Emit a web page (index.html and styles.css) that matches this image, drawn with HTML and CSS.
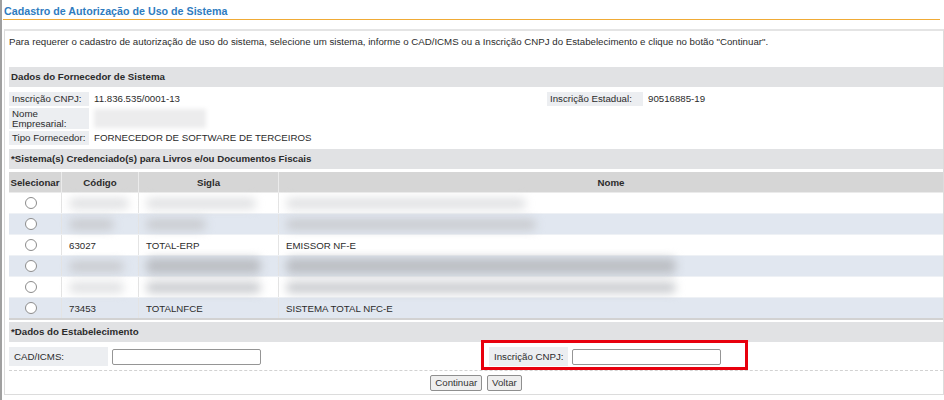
FILE: index.html
```html
<!DOCTYPE html>
<html lang="pt-BR">
<head>
  <meta charset="UTF-8">
  <title>Cadastro de Autorização de Uso de Sistema</title>
  <link rel="stylesheet" href="styles.css">
</head>
<body>
  <h1 class="page-title">Cadastro de Autorização de Uso de Sistema</h1>

  <div class="panel">
    <p class="intro">Para requerer o cadastro de autorização de uso do sistema, selecione um sistema, informe o CAD/ICMS ou a Inscrição CNPJ do Estabelecimento e clique no botão "Continuar".</p>

    <div class="section-head">Dados do Fornecedor de Sistema</div>
    <table class="info">
      <tr class="r-short">
        <td class="lbl">Inscrição CNPJ:</td>
        <td class="val val-wide">11.836.535/0001-13</td>
        <td class="lbl lbl-ie">Inscrição Estadual:</td>
        <td class="val">90516885-19</td>
      </tr>
      <tr class="r-tall">
        <td class="lbl">Nome<br>Empresarial:</td>
        <td class="val" colspan="3"><span class="smudge smudge-name"></span></td>
      </tr>
      <tr class="r-short">
        <td class="lbl">Tipo Fornecedor:</td>
        <td class="val" colspan="3">FORNECEDOR DE SOFTWARE DE TERCEIROS</td>
      </tr>
    </table>

    <div class="section-head">*Sistema(s) Credenciado(s) para Livros e/ou Documentos Fiscais</div>
    <table class="grid">
      <tr>
        <th class="c-sel">Selecionar</th>
        <th class="c-cod">Código</th>
        <th class="c-sig">Sigla</th>
        <th>Nome</th>
      </tr>
      <tr>
        <td class="center"><span class="radio"></span></td>
        <td><span class="smudge light" style="width:60px"></span></td>
        <td><span class="smudge light" style="width:110px"></span></td>
        <td><span class="smudge light" style="width:240px"></span></td>
      </tr>
      <tr class="alt">
        <td class="center"><span class="radio"></span></td>
        <td><span class="smudge" style="width:45px"></span></td>
        <td><span class="smudge" style="width:60px"></span></td>
        <td><span class="smudge" style="width:250px"></span></td>
      </tr>
      <tr>
        <td class="center"><span class="radio"></span></td>
        <td>63027</td>
        <td>TOTAL-ERP</td>
        <td>EMISSOR NF-E</td>
      </tr>
      <tr class="alt">
        <td class="center"><span class="radio"></span></td>
        <td><span class="smudge" style="width:55px"></span></td>
        <td><span class="smudge dark" style="width:115px"></span></td>
        <td><span class="smudge dark" style="width:390px"></span></td>
      </tr>
      <tr>
        <td class="center"><span class="radio"></span></td>
        <td><span class="smudge light" style="width:55px"></span></td>
        <td><span class="smudge" style="width:115px"></span></td>
        <td><span class="smudge" style="width:390px"></span></td>
      </tr>
      <tr class="alt">
        <td class="center"><span class="radio"></span></td>
        <td>73453</td>
        <td>TOTALNFCE</td>
        <td>SISTEMA TOTAL NFC-E</td>
      </tr>
    </table>

    <div class="section-head">*Dados do Estabelecimento</div>
    <div class="estab">
      <div class="field field-cad">
        <span class="lbl lbl-cad">CAD/ICMS:</span>
        <input type="text" class="txt">
      </div>
      <div class="field highlight">
        <span class="lbl">Inscrição CNPJ:</span>
        <input type="text" class="txt">
      </div>
    </div>

    <div class="actions">
      <button type="button" class="btn">Continuar</button>
      <button type="button" class="btn">Voltar</button>
    </div>
  </div>
</body>
</html>
```

FILE: styles.css
```css
html, body {
  overflow: hidden;
}
body {
  margin: 0;
  height: 400px;
  border-left: 2px solid #a0a0a0;
  font-family: "Liberation Sans", Arial, sans-serif;
  font-size: 9.7px;
  color: #2b2b2b;
  background: #fff;
}
.page-title {
  margin: 0 4px 0 1px;
  padding: 5px 0 2px 1px;
  font-size: 10.7px;
  font-weight: bold;
  color: #2f7cc0;
  border-bottom: 1px solid #f0ab36;
}
.panel {
  margin: 9px 0 0 2px;
  padding: 0 0 0 4px;
  border: 1px solid #dcdcdc;
  border-top: 2px solid #e4e4e4;
  height: 363px;
}
.intro {
  margin: 0;
  padding: 5px 0 0 0;
  height: 31px;
  line-height: 11px;
}
.section-head {
  background: #e1e2e4;
  font-weight: bold;
  height: 20px;
  line-height: 20px;
  padding-left: 2px;
}
.info {
  border-collapse: separate;
  border-spacing: 0 2px;
  margin: 3px 0 2px;
}
.info td {
  padding: 0 3px;
  vertical-align: middle;
  line-height: 10px;
  white-space: nowrap;
}
.info .r-short td {
  height: 14px;
}
.info .r-tall td {
  height: 21px;
}
.info .lbl {
  background: #eceef1;
  width: 74px;
}
.info .lbl-ie {
  width: 90px;
}
.info .val {
  padding-left: 5px;
}
.info .val-wide {
  width: 450px;
}
.smudge {
  display: inline-block;
  height: 11px;
  vertical-align: middle;
  background: #c9cbcf;
  border-radius: 6px;
  filter: blur(5px);
}
.smudge.light {
  background: #e0e1e3;
}
.smudge.dark {
  background: #bcbfc4;
  height: 16px;
}
.smudge-name {
  width: 112px;
  height: 19px;
  border-radius: 0;
  background: #ececed;
  filter: blur(2px);
}
.grid {
  border-collapse: collapse;
  table-layout: fixed;
  width: 100%;
  margin: 3px 0 2px;
  border-bottom: 2px solid #d2d2d2;
}
.grid th {
  background: #d6d6d6;
  height: 20px;
  padding: 0;
  font-weight: bold;
  border-left: 1px solid #ebebeb;
  border-bottom: 1px solid #ebebeb;
}
.grid th:first-child {
  border-left: none;
}
.grid td {
  height: 20px;
  padding: 0 7px;
  border-left: 1px solid #e4e4e4;
  border-bottom: 1px solid #eef1f5;
  white-space: nowrap;
  overflow: visible;
}
.grid td:first-child {
  border-left: none;
}
.grid .alt td {
  background: #e1e7f0;
}
.grid .center {
  text-align: center;
  padding: 0 8px 0 0;
}
.c-sel {
  width: 52px;
}
.c-cod {
  width: 76px;
}
.c-sig {
  width: 139px;
}
.radio {
  display: inline-block;
  width: 10px;
  height: 10px;
  border: 1px solid #8c8c8c;
  border-radius: 50%;
  background: #fff;
  vertical-align: middle;
}
.estab {
  display: flex;
  padding: 5px 0 4px;
  border-bottom: 1px dashed #d2d2d2;
}
.field {
  display: flex;
  align-items: center;
  gap: 4px;
}
.field-cad {
  width: 480px;
}
.estab .lbl {
  background: #eceef1;
  height: 19px;
  line-height: 19px;
  padding: 0 5px;
}
.lbl-cad {
  width: 89px;
}
.txt {
  width: 149px;
  height: 16px;
  box-sizing: border-box;
  border: 1px solid #959595;
  border-radius: 2px;
  padding: 0;
}
.highlight {
  position: relative;
}
.highlight::after {
  content: "";
  position: absolute;
  left: -8px;
  top: -7px;
  width: 261px;
  height: 24px;
  border: 3px solid #e8000d;
}
.actions {
  text-align: center;
  padding-top: 4px;
}
.btn {
  font-family: "Liberation Sans", Arial, sans-serif;
  font-size: 9.7px;
  color: #333;
  background: #efefef;
  border: 1px solid #8f8f8f;
  border-radius: 2px;
  padding: 0 4px;
  margin: 0 1px;
  height: 16px;
  line-height: 12px;
}
```
